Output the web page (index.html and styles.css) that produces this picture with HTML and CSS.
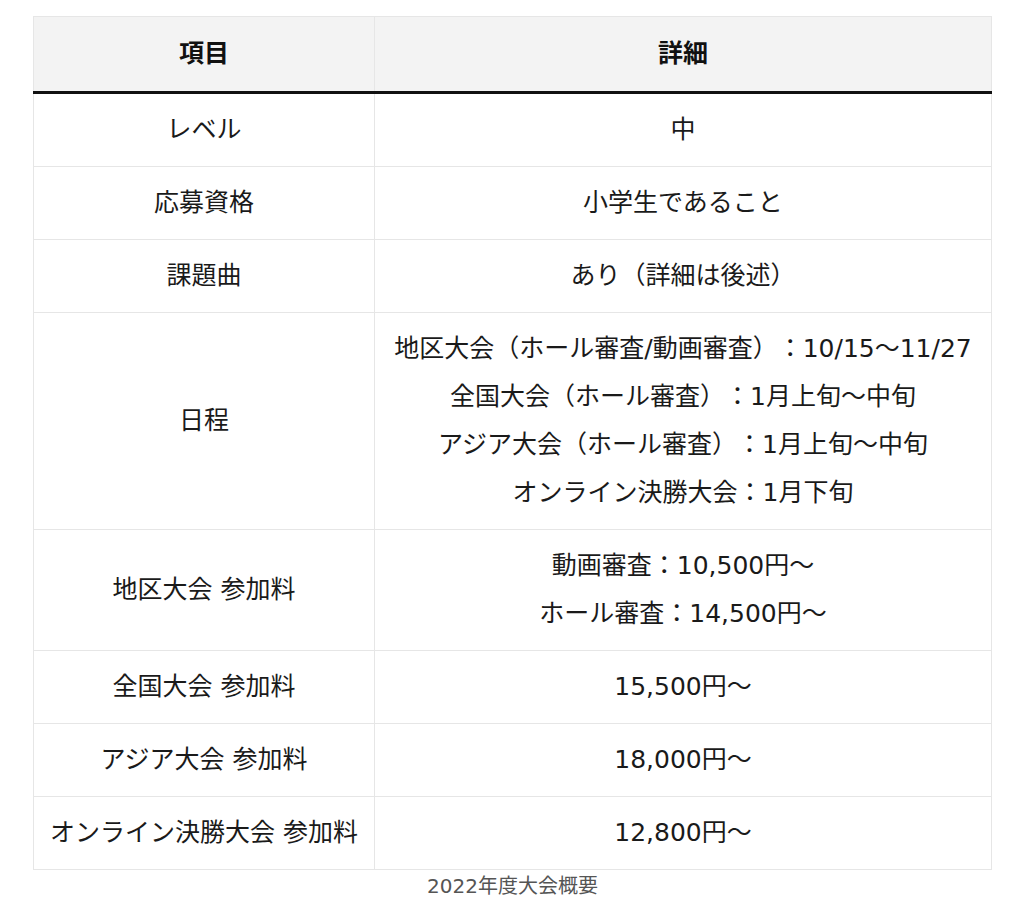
FILE: index.html
```html
<!DOCTYPE html>
<html lang="ja">
<head>
<meta charset="utf-8">
<title>2022年度大会概要</title>
<link rel="stylesheet" href="styles.css">
</head>
<body>
<div class="wrap">
<table class="overview">
  <colgroup><col class="col-item"><col class="col-detail"></colgroup>
  <thead>
    <tr><th>項目</th><th>詳細</th></tr>
  </thead>
  <tbody>
    <tr><td>レベル</td><td>中</td></tr>
    <tr><td>応募資格</td><td>小学生であること</td></tr>
    <tr><td>課題曲</td><td>あり（詳細は後述）</td></tr>
    <tr><td>日程</td><td>地区大会（ホール審査/動画審査）：10/15〜11/27<br>全国大会（ホール審査）：1月上旬〜中旬<br>アジア大会（ホール審査）：1月上旬〜中旬<br>オンライン決勝大会：1月下旬</td></tr>
    <tr><td>地区大会 参加料</td><td>動画審査：10,500円〜<br>ホール審査：14,500円〜</td></tr>
    <tr><td>全国大会 参加料</td><td>15,500円〜</td></tr>
    <tr><td>アジア大会 参加料</td><td>18,000円〜</td></tr>
    <tr><td>オンライン決勝大会 参加料</td><td>12,800円〜</td></tr>
  </tbody>
  <caption>2022年度大会概要</caption>
</table>
</div>
</body>
</html>
```
FILE: styles.css
```css
html, body {
  margin: 0;
  padding: 0;
  background: #fff;
}
body {
  font-family: "DejaVu Sans", "Noto Sans CJK JP", sans-serif;
  color: #1a1a1a;
}
.wrap {
  padding: 16px 32px 0 33px;
}
.overview {
  width: 100%;
  border-collapse: collapse;
  font-size: 25px;
  line-height: 48px;
  text-spacing-trim: space-all;
}
.col-item {
  width: 341px;
}
.overview th,
.overview td {
  border: 1px solid #e6e6e6;
  padding: 12px 8px;
  text-align: center;
  vertical-align: middle;
}
.overview th {
  padding: 13px 8px;
  background: #f3f3f3;
  font-weight: bold;
  color: #111;
  border-bottom: 3px solid #111;
}
.overview caption {
  caption-side: bottom;
  font-size: 20px;
  line-height: 30px;
  color: #555;
  padding-top: 1px;
  text-spacing-trim: space-all;
}
```
